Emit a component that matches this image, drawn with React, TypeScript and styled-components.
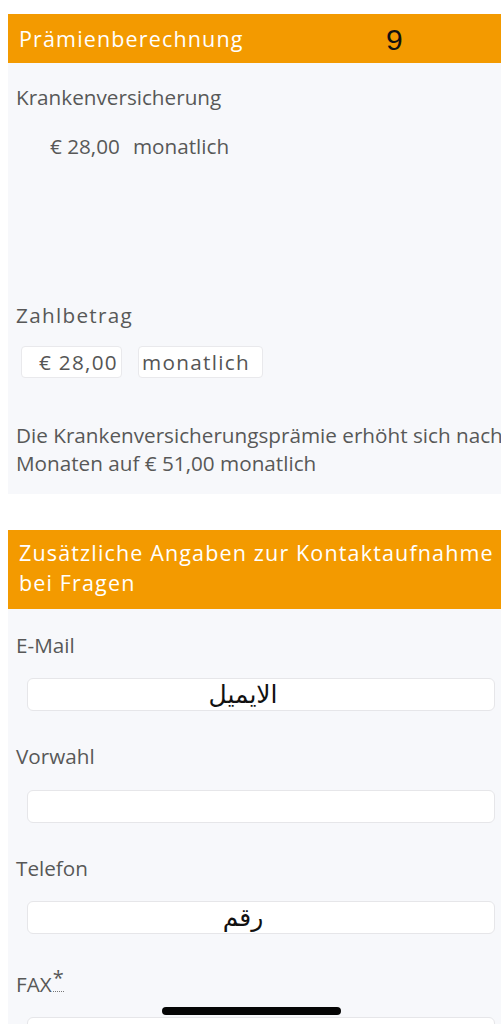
import React from 'react'
import styled, { createGlobalStyle } from 'styled-components';

const GlobalStyle = createGlobalStyle`
    html, body {
        margin: 0;
        padding: 0;
        background: #ffffff;
        overflow: hidden;
    }
    body {
        font-family: "Open Sans", "Noto Sans", sans-serif;
    }
`;

const Page = styled.div`
    padding: 14px 0 0 8px;
    width: 530px;
    height: 1024px;
    overflow: hidden;
`;

const Panel = styled.section<{ gap?: number }>`
    background: #f7f8fb;
    margin-bottom: ${(props) => props.gap ?? 0}px;
`;

const PanelHeader = styled.div`
    background: #f39a00;
    color: #ffffff;
    height: 49px;
    padding: 0 11px;
    display: flex;
    align-items: center;
    font-size: 21.5px;
    letter-spacing: 1.15px;
`;

const HeaderTitle = styled.span`
    width: 367px;
`;

const StepNumber = styled.span`
    font-family: "Liberation Sans", Arial, sans-serif;
    color: #111;
    font-size: 30px;
    letter-spacing: 0;
    padding-top: 2px;
`;

const WrappedHeader = styled.div`
    background: #f39a00;
    color: #ffffff;
    padding: 8px 11px 11px;
    font-size: 21.5px;
    line-height: 30px;
    letter-spacing: 1.15px;
    white-space: nowrap;
`;

const Body = styled.div<{ bottom?: number }>`
    padding: 0 8px ${(props) => props.bottom ?? 0}px;
    color: #585858;
    font-size: 20.7px;
    line-height: 28px;
`;

const Label = styled.div<{ top: number; spaced?: boolean }>`
    margin-top: ${(props) => props.top}px;
    letter-spacing: ${(props) => props.spaced ? '1.3px' : '0'};
`;

const AmountRow = styled.div`
    margin-top: 21px;
    padding-left: 34px;
    display: flex;
    gap: 13px;
`;

const BoxRow = styled.div`
    margin-top: 17px;
    padding-left: 5px;
    display: flex;
    gap: 16px;
`;

const ValueBox = styled.div<{ width: number; align: 'left' | 'right' }>`
    box-sizing: border-box;
    width: ${(props) => props.width}px;
    height: 32px;
    background: #ffffff;
    border: 1px solid #e9e9ec;
    border-radius: 4px;
    padding: 0 3px;
    display: flex;
    align-items: center;
    justify-content: ${(props) => props.align === 'right' ? 'flex-end' : 'flex-start'};
    letter-spacing: 1.3px;
    color: #555;
`;

const Note = styled.p`
    margin: 43px 0 0;
    white-space: nowrap;
`;

const TextInput = styled.input<{ top: number }>`
    display: block;
    box-sizing: border-box;
    margin: ${(props) => props.top}px 0 0 11px;
    width: 468px;
    height: 33px;
    background: #ffffff;
    border: 1px solid #e6e6e9;
    border-radius: 6px;
    padding: 0 36px 0 0;
    text-align: center;
    font-family: "DejaVu Sans", "Noto Sans", sans-serif;
    font-size: 25px;
    outline: none;

    &::placeholder {
        color: #111;
        opacity: 1;
    }
`;

const Required = styled.sup`
    font-size: 20px;
    line-height: 0;
    position: relative;
    top: 1px;
    margin-left: 1px;
    border-bottom: 1px dotted #777;
`;

const HomeIndicator = styled.div`
    position: fixed;
    left: 162px;
    top: 1007px;
    width: 179px;
    height: 8px;
    border-radius: 4px;
    background: #050505;
`;

const App = () => {
    return (
        <>
            <GlobalStyle />
            <Page>
                <Panel gap={36}>
                    <PanelHeader>
                        <HeaderTitle>Prämienberechnung</HeaderTitle>
                        <StepNumber>9</StepNumber>
                    </PanelHeader>
                    <Body bottom={17}>
                        <Label top={20}>Krankenversicherung</Label>
                        <AmountRow>
                            <span>€ 28,00</span>
                            <span>monatlich</span>
                        </AmountRow>
                        <Label top={141} spaced>Zahlbetrag</Label>
                        <BoxRow>
                            <ValueBox width={101} align="right">€ 28,00</ValueBox>
                            <ValueBox width={125} align="left">monatlich</ValueBox>
                        </BoxRow>
                        <Note>
                            Die Krankenversicherungsprämie erhöht sich nach<br />
                            Monaten auf € 51,00 monatlich
                        </Note>
                    </Body>
                </Panel>
                <Panel>
                    <WrappedHeader>
                        Zusätzliche Angaben zur Kontaktaufnahme<br />
                        bei Fragen
                    </WrappedHeader>
                    <Body bottom={40}>
                        <Label top={22}>E-Mail</Label>
                        <TextInput top={19} type="email" placeholder="الايميل" />
                        <Label top={31}>Vorwahl</Label>
                        <TextInput top={20} type="tel" />
                        <Label top={31}>Telefon</Label>
                        <TextInput top={19} type="tel" placeholder="رقم" />
                        <Label top={36}>FAX<Required>*</Required></Label>
                        <TextInput top={19} type="tel" />
                    </Body>
                </Panel>
            </Page>
            <HomeIndicator />
        </>
    )
}

export default App;
